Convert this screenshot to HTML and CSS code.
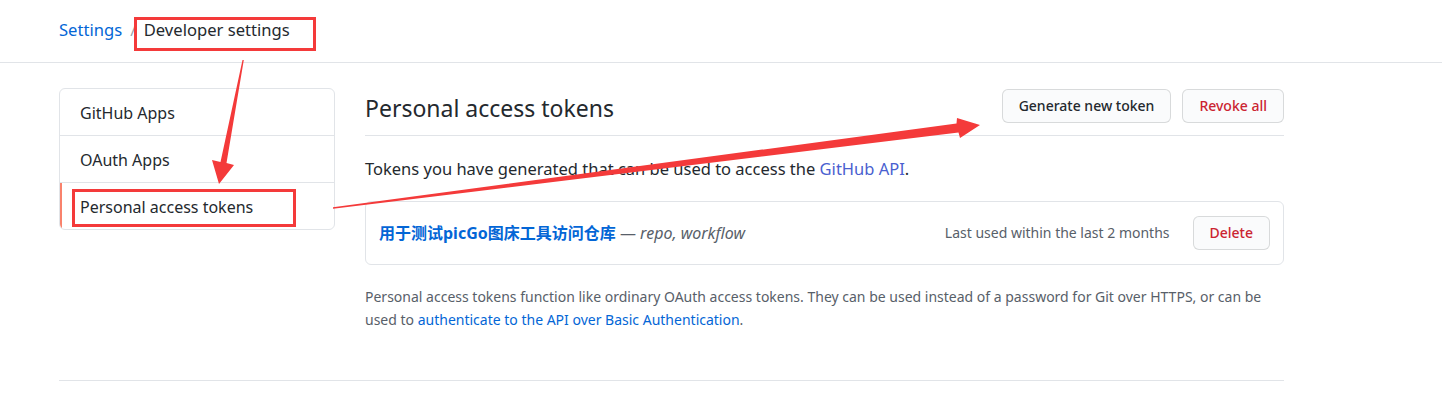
FILE: index.html
```html
<!DOCTYPE html>
<html lang="en">
<head>
<meta charset="utf-8">
<title>Personal access tokens</title>
<link rel="stylesheet" href="styles.css">
</head>
<body>
<header class="topbar">
  <nav class="breadcrumb">
    <a class="crumb-link" href="#">Settings</a>
    <span class="crumb-sep">/</span>
    <span class="crumb-current">Developer settings</span>
  </nav>
</header>
<div class="layout">
  <aside class="sidebar">
    <a class="side-item" href="#">GitHub Apps</a>
    <a class="side-item" href="#">OAuth Apps</a>
    <a class="side-item selected" href="#">Personal access tokens</a>
  </aside>
  <main class="main">
    <div class="subhead">
      <h2 class="subhead-title">Personal access tokens</h2>
      <div class="subhead-actions">
        <button class="btn">Generate new token</button>
        <button class="btn btn-danger">Revoke all</button>
      </div>
    </div>
    <p class="lead">Tokens you have generated that can be used to access the <a class="link-api" href="#">GitHub API</a>.</p>
    <div class="token-box">
      <div class="token-name"><a class="token-link" href="#">用于测试picGo图床工具访问仓库</a> <span class="token-scopes">— <em>repo, workflow</em></span></div>
      <div class="token-right">
        <span class="token-used">Last used within the last 2 months</span>
        <button class="btn btn-danger btn-sm">Delete</button>
      </div>
    </div>
    <p class="note">Personal access tokens function like ordinary OAuth access tokens. They can be used instead of a password for Git over HTTPS, or can be used to <a class="link" href="#">authenticate to the API over Basic Authentication</a>.</p>
  </main>
</div>
<div class="footer-rule"></div>
<svg class="annot" width="1442" height="406" viewBox="0 0 1442 406">
  <rect x="135.5" y="18.5" width="179" height="31" fill="none" stroke="#f43a3a" stroke-width="3"/>
  <rect x="73.5" y="190.5" width="221" height="35" fill="none" stroke="#f43a3a" stroke-width="3"/>
  <polygon points="242.5,60 243.8,60 226.5,163 234,165 219,184 212,160 220.5,162" fill="#f43a3a"/>
  <polygon points="333,207.3 333,208.7 958.5,132.5 960,138 980,125 957,118 956.5,123.5" fill="#f43a3a"/>
</svg>
</body>
</html>
```
FILE: styles.css
```css
* { box-sizing: border-box; }
html, body { margin: 0; padding: 0; }
body {
  position: relative;
  width: 1442px;
  height: 406px;
  overflow: hidden;
  background: #fff;
  color: #24292e;
  font-family: "Noto Sans", "Noto Sans CJK SC", sans-serif;
  font-size: 14px;
}
a { text-decoration: none; }

.topbar {
  height: 63px;
  border-bottom: 1px solid #e1e4e8;
  padding: 17px 0 0 59px;
}
.breadcrumb {
  display: flex;
  align-items: baseline;
  font-size: 16.6px;
  line-height: 26px;
}
.crumb-link { color: #0366d6; }
.crumb-sep { color: #959da5; margin: 0 8px 0 8px; font-size: 15px; }
.crumb-current { color: #24292e; }

.layout {
  display: flex;
  gap: 30px;
  padding: 25px 0 0 59px;
  width: 1284px;
}
.sidebar {
  flex: 0 0 276px;
  align-self: flex-start;
  display: flex;
  flex-direction: column;
  border: 1px solid #e1e4e8;
  border-radius: 6px;
  overflow: hidden;
}
.side-item {
  display: block;
  padding: 12px 20px 10px;
  line-height: 24px;
  font-size: 16px;
  color: #24292e;
  border-top: 1px solid #e1e4e8;
}
.side-item:first-child { border-top: 0; }
.side-item.selected { box-shadow: inset 2px 0 0 #f9826c; }

.main { flex: 1; min-width: 0; }
.subhead {
  display: flex;
  align-items: flex-start;
  justify-content: space-between;
  border-bottom: 1px solid #e1e4e8;
  height: 48px;
}
.subhead-title {
  margin: 5px 0 0;
  font-size: 23px;
  line-height: 30px;
  font-weight: 400;
}
.subhead-actions { display: flex; gap: 11px; padding-top: 1px; }
.btn {
  font-family: inherit;
  font-size: 14px;
  font-weight: 500;
  line-height: 20px;
  height: 34px;
  padding: 0 16px;
  color: #24292e;
  background: #fafbfc;
  border: 1px solid rgba(27, 31, 35, 0.15);
  border-radius: 6px;
}
.btn-danger { color: #cb2431; }
.btn-sm { height: 34px; padding: 0 16px; }

.lead {
  margin: 21px 0 0;
  font-size: 16.5px;
  line-height: 24px;
}
.link-api { color: #4a5fd0; }

.token-box {
  margin-top: 20px;
  height: 64px;
  border: 1px solid #e1e4e8;
  border-radius: 6px;
  display: flex;
  align-items: center;
  justify-content: space-between;
  padding: 0 13px 0 13px;
}
.token-name { font-size: 16px; line-height: 20px; margin-top: 0; }
.token-link { color: #0366d6; font-weight: 700; }
.token-scopes { color: #586069; font-size: 16px; }
.token-scopes em { font-style: italic; }
.token-right { display: flex; align-items: center; gap: 23px; }
.token-used { color: #586069; font-size: 14px; margin-top: -2px; }

.note {
  margin: 20px 0 0;
  font-size: 14px;
  line-height: 23px;
  color: #586069;
}
.link { color: #0366d6; }

.footer-rule {
  position: absolute;
  left: 59px;
  top: 380px;
  width: 1225px;
  height: 1px;
  background: #e1e4e8;
}
.annot {
  position: absolute;
  left: 0;
  top: 0;
  pointer-events: none;
}
```
